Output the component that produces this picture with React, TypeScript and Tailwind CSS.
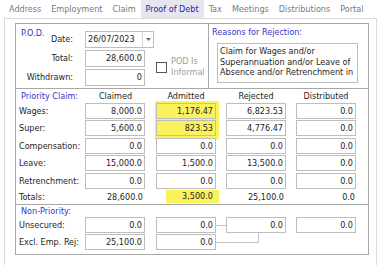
import { Fragment } from "react";
import clsx from "clsx";

const tabs = ["Address", "Employment", "Claim", "Proof of Debt", "Tax", "Meetings", "Distributions", "Portal"];

const priority = [
  { label: "Wages:", claimed: "8,000.0", admitted: "1,176.47", rejected: "6,823.53", distributed: "0.0" },
  { label: "Super:", claimed: "5,600.0", admitted: "823.53", rejected: "4,776.47", distributed: "0.0" },
  { label: "Compensation:", claimed: "0.0", admitted: "0.0", rejected: "0.0", distributed: "0.0" },
  { label: "Leave:", claimed: "15,000.0", admitted: "1,500.0", rejected: "13,500.0", distributed: "0.0" },
  { label: "Retrenchment:", claimed: "0.0", admitted: "0.0", rejected: "0.0", distributed: "0.0" },
];

function Field({ value, className }: { value: string; className?: string }) {
  return (
    <div
      className={clsx(
        "h-[16px] whitespace-nowrap border border-[#bdbdbd] pr-[2px] text-right leading-[14px]",
        className ?? "bg-white"
      )}
    >
      {value}
    </div>
  );
}

const grid = "grid grid-cols-[56px_61px_60px_60px_60px] gap-x-[10px]";

export default function App() {
  return (
    <div className="h-[265px] w-[382px] overflow-hidden bg-white font-['DejaVu_Sans_Condensed','DejaVu_Sans',sans-serif] text-[9px] text-[#1e1e1e]">
      <div className="flex h-[18px] pl-[4px]">
        {tabs.map((t) => (
          <div
            key={t}
            className={clsx(
              "flex items-center px-[5px] pt-[1px]",
              t === "Proof of Debt" ? "bg-[#e6e6ef] text-[#28289a]" : "text-[#7a7a7a]"
            )}
          >
            {t}
          </div>
        ))}
      </div>

      <div className="ml-[4px] h-[247px] w-[373px] border border-b-0 border-[#dadada] pl-[10px] pt-[4px]">
        <div className="w-[354px] border border-[#a8a8a8]">
          {/* P.O.D. + reasons */}
          <div className="flex h-[64px]">
            <div className="flex w-[193px] border-r border-[#a8a8a8] pl-[5px] pt-[7px]">
              <div className="flex flex-col gap-y-[2px]">
                <div className="flex h-[17px] items-center">
                  <div className="flex w-[52px] justify-between self-stretch">
                    <span className="-mt-[3px] self-start leading-[10px] text-[#3434c8]">P.O.D.</span>
                    <span className="self-center">Date:</span>
                  </div>
                  <div className="ml-[12px] flex h-[17px] w-[69px] border border-[#bdbdbd]">
                    <span className="flex-1 pl-[2px] leading-[15px]">26/07/2023</span>
                    <span className="flex w-[11px] items-center justify-center border-l border-[#d6d6d6]">
                      <svg width="5" height="3" viewBox="0 0 5 3">
                        <path d="M0 0h5L2.5 3z" fill="#6b6b6b" />
                      </svg>
                    </span>
                  </div>
                </div>
                <div className="flex h-[17px] items-center">
                  <span className="w-[52px] text-right">Total:</span>
                  <Field value="28,600.0" className="ml-[12px] h-[17px] w-[60px] bg-white leading-[15px]" />
                </div>
                <div className="flex h-[17px] items-center">
                  <span className="w-[52px] text-right">Withdrawn:</span>
                  <Field value="0" className="ml-[12px] h-[17px] w-[60px] bg-white leading-[15px]" />
                </div>
              </div>
              <div className="ml-[2px] mt-[25px] flex h-[22px] items-center">
                <div className="h-[11px] w-[11px] border border-[#555]" />
                <span className="ml-[4px] leading-[11px] text-[#a0a0a0]">
                  POD Is
                  <br />
                  Informal
                </span>
              </div>
            </div>
            <div className="flex-1 pl-[3px] pt-[3px]">
              <div className="leading-[10px] text-[#3434c8]">Reasons for Rejection:</div>
              <div className="ml-[5px] mt-[6px] h-[40px] w-[141px] border border-[#bdbdbd] pl-[2px] pt-[2px] leading-[10.5px]">
                Claim for Wages and/or Superannuation and/or Leave of Absence and/or Retrenchment in
              </div>
            </div>
          </div>

          {/* Priority claims */}
          <div className="border-t border-[#a8a8a8] pl-[3px] pt-[2px]">
            <div className={clsx(grid, "gap-y-[1.5px]")}>
              <div className="h-[10px] whitespace-nowrap pl-[2px] leading-[10px] text-[#3434c8]">Priority Claim:</div>
              <div className="text-center leading-[10px]">Claimed</div>
              <div className="text-center leading-[10px]">Admitted</div>
              <div className="text-center leading-[10px]">Rejected</div>
              <div className="text-center leading-[10px]">Distributed</div>

              {priority.map((r, i) => (
                <Fragment key={r.label}>
                  <div className="whitespace-nowrap leading-[16px]">{r.label}</div>
                  <Field value={r.claimed} className="w-[60px] bg-white" />
                  {i === 0 && (
                    <div className="row-span-2 -mb-[4px] -ml-px -mr-[3px] -mt-[2px] flex flex-col gap-y-[1.5px] rounded-br-[3px] bg-[#faf25c] pb-[4px] pl-px pr-[3px] pt-[2px]">
                      <Field value={priority[0].admitted} className="bg-transparent" />
                      <Field value={priority[1].admitted} className="bg-transparent" />
                    </div>
                  )}
                  {i > 1 && <Field value={r.admitted} />}
                  <Field value={r.rejected} />
                  <Field value={r.distributed} />
                </Fragment>
              ))}

              <div className="h-[14px] leading-[14px]">Totals:</div>
              <div className="pr-[3px] text-right leading-[14px]">28,600.0</div>
              <div className="-mr-[3px] ml-[10px] h-[13px] bg-[#faf25c] pr-[6px] text-right leading-[13px]">3,500.0</div>
              <div className="pr-[2px] text-right leading-[14px]">25,100.0</div>
              <div className="pr-[1px] text-right leading-[14px]">0.0</div>
            </div>
          </div>

          {/* Non-priority */}
          <div className="border-t border-[#a8a8a8] pb-[4px] pl-[3px] pt-[1px]">
            <div className="pl-[2px] leading-[11px] text-[#3434c8]">Non-Priority:</div>
            <div className={clsx(grid, "gap-y-[1px]")}>
              <div className="whitespace-nowrap leading-[16px]">Unsecured:</div>
              <Field value="0.0" className="w-[60px] bg-white" />
              <div className="flex items-center">
                <Field value="0.0" className="w-full bg-white" />
                <div className="-mr-[10px] h-px w-[10px] shrink-0 bg-[#c4c4c4]" />
              </div>
              <Field value="0.0" />
              <Field value="0.0" />

              <div className="whitespace-nowrap leading-[16px]">Excl. Emp. Rej:</div>
              <Field value="25,100.0" className="w-[60px] bg-white" />
              <div className="flex">
                <Field value="0.0" className="w-full bg-white" />
                <div className="-mr-[43px] -mt-[2px] h-[11px] w-[43px] shrink-0 self-start border-b border-r border-[#c4c4c4]" />
              </div>
              <div />
              <div />
            </div>
          </div>
        </div>
      </div>
    </div>
  );
}
